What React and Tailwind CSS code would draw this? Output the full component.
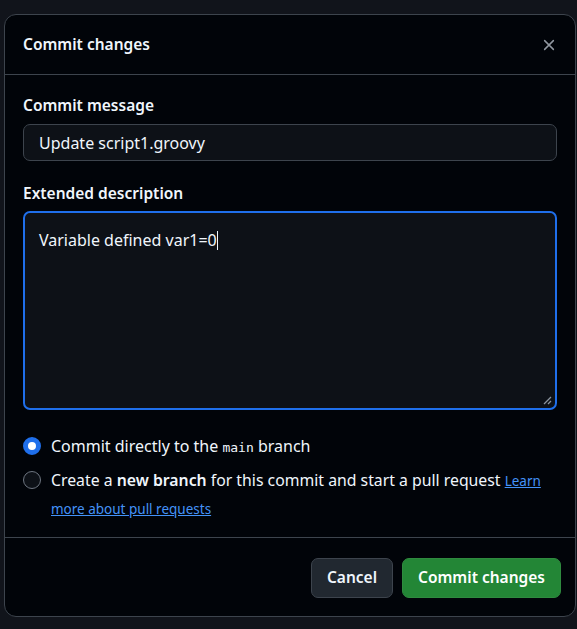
import React from "react";

const font = { fontFamily: '"Noto Sans", "Open Sans", sans-serif' };

export default function App() {
  return (
    <div className="w-[577px] h-[629px] bg-[#11141b] overflow-hidden relative" style={font}>
      <div className="absolute left-[4px] top-[14px] w-[572px] h-[603px] rounded-[12px] border border-[#3d444d] bg-[#010409] flex flex-col">
        <div className="h-[60px] flex items-center justify-between pl-[18px] pr-[16px] border-b border-[#3d444d] shrink-0">
          <span className="text-[15.5px] font-semibold text-[#f0f6fc]">Commit changes</span>
          <svg width="14" height="14" viewBox="0 0 16 16" className="mr-[3px]" fill="none" stroke="#9198a1" strokeWidth="1.7" strokeLinecap="round">
            <path d="M3 3l10 10M13 3L3 13" />
          </svg>
        </div>
        <div className="flex flex-col px-[18px] pt-[19px] flex-1">
          <label className="text-[15.5px] font-semibold text-[#f0f6fc] leading-[22px]">Commit message</label>
          <div className="mt-[8px] h-[37px] rounded-[7px] border border-[#3d444d] bg-[#0d1117] flex items-center px-[15px] text-[16px] text-[#f0f6fc]">
            Update script1.groovy
          </div>
          <label className="mt-[21px] text-[15.5px] font-semibold text-[#f0f6fc] leading-[22px]">Extended description</label>
          <div className="mt-[7px] h-[199px] rounded-[7px] border-2 border-[#1f6feb] bg-[#0d1117] relative px-[14px] pt-[15px] text-[16px] text-[#f0f6fc]">
            <span>Variable defined var1=0</span>
            <span className="inline-block w-[1px] h-[19px] bg-[#f0f6fc] align-[-4px]"></span>
            <svg className="absolute right-[3px] bottom-[3px]" width="10" height="10" viewBox="0 0 10 10" stroke="#8b949e" strokeWidth="1.3">
              <path d="M9 2L2 9M9 6L6 9" />
            </svg>
          </div>
          <div className="mt-[24px] flex items-center gap-[10px]">
            <span className="w-[18px] h-[18px] rounded-full border-[5px] border-[#1f6feb] bg-white shrink-0"></span>
            <span className="text-[16px] text-[#f0f6fc]">
              Commit directly to the <span className="text-[13px]" style={{ fontFamily: '"DejaVu Sans Mono", monospace' }}>main</span> branch
            </span>
          </div>
          <div className="mt-[9px] flex items-start gap-[10px]">
            <span className="mt-[4px] w-[18px] h-[18px] rounded-full border border-[#6e7681] bg-[#0d1117] shrink-0"></span>
            <div className="text-[15.8px] text-[#f0f6fc] leading-[27px] w-[506px]">
              Create a <span className="font-semibold">new branch</span> for this commit and start a pull request{" "}
              <a className="text-[13.5px] text-[#4493f8] underline">Learn more about pull requests</a>
            </div>
          </div>
        </div>
        <div className="border-t border-[#3d444d] h-[79px] shrink-0 flex items-center justify-end gap-[9px] pr-[14px] pt-[1px]">
          <button className="h-[40px] px-[15px] rounded-[7px] border border-[#3d444d] bg-[#212830] text-[15.5px] font-semibold text-[#f0f6fc]">Cancel</button>
          <button className="h-[40px] px-[15px] rounded-[7px] border border-[#2f8a3f] bg-[#238636] text-[15.5px] font-semibold text-white">Commit changes</button>
        </div>
      </div>
    </div>
  );
}
